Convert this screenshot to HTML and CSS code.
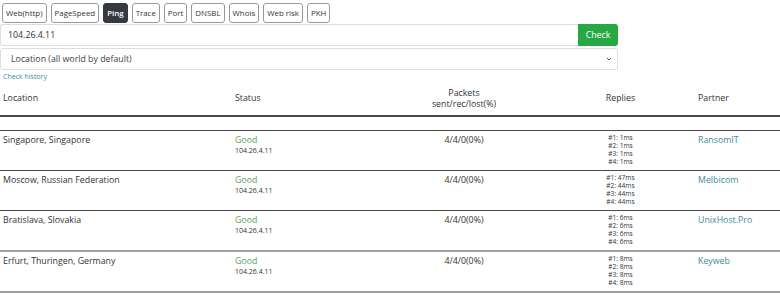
FILE: index.html
```html
<!DOCTYPE html>
<html lang="en">
<head>
    <meta charset="UTF-8">
    <title>Ping</title>
    <link rel="stylesheet" href="styles.css">
</head>
<body>
    <div class="wrap">
        <div class="tabs">
            <button type="button" class="tab">Web(http)</button>
            <button type="button" class="tab">PageSpeed</button>
            <button type="button" class="tab is-active">Ping</button>
            <button type="button" class="tab">Trace</button>
            <button type="button" class="tab">Port</button>
            <button type="button" class="tab">DNSBL</button>
            <button type="button" class="tab">Whois</button>
            <button type="button" class="tab">Web risk</button>
            <button type="button" class="tab">PKH</button>
        </div>

        <div class="form">
            <div class="input-group">
                <input type="text" class="field" value="104.26.4.11">
                <button type="button" class="check-btn">Check</button>
            </div>
            <div class="select-box">
                <span>Location (all world by default)</span>
                <svg class="caret" width="6" height="4" viewBox="0 0 6 4"><path d="M1 1l2 2 2-2" fill="none" stroke="#555" stroke-width="1"/></svg>
            </div>
        </div>

        <a class="history" href="#">Check history</a>

        <table class="result">
            <colgroup>
                <col class="c-loc">
                <col class="c-status">
                <col class="c-packets">
                <col class="c-replies">
                <col class="c-partner">
            </colgroup>
            <thead>
                <tr>
                    <th>Location</th>
                    <th>Status</th>
                    <th class="center">Packets<br>sent/rec/lost(%)</th>
                    <th class="center">Replies</th>
                    <th>Partner</th>
                </tr>
            </thead>
            <tbody>
                <tr class="spacer"><td colspan="5"></td></tr>
                <tr>
                    <td>Singapore, Singapore</td>
                    <td><span class="good">Good</span><span class="ip">104.26.4.11</span></td>
                    <td class="center">4/4/0(0%)</td>
                    <td class="center"><ul class="replies"><li>#1: 1ms</li><li>#2: 1ms</li><li>#3: 1ms</li><li>#4: 1ms</li></ul></td>
                    <td><a class="partner" href="#">RansomIT</a></td>
                </tr>
                <tr>
                    <td>Moscow, Russian Federation</td>
                    <td><span class="good">Good</span><span class="ip">104.26.4.11</span></td>
                    <td class="center">4/4/0(0%)</td>
                    <td class="center"><ul class="replies"><li>#1: 47ms</li><li>#2: 44ms</li><li>#3: 44ms</li><li>#4: 44ms</li></ul></td>
                    <td><a class="partner" href="#">Melbicom</a></td>
                </tr>
                <tr class="soft">
                    <td>Bratislava, Slovakia</td>
                    <td><span class="good">Good</span><span class="ip">104.26.4.11</span></td>
                    <td class="center">4/4/0(0%)</td>
                    <td class="center"><ul class="replies"><li>#1: 6ms</li><li>#2: 6ms</li><li>#3: 6ms</li><li>#4: 6ms</li></ul></td>
                    <td><a class="partner" href="#">UnixHost.Pro</a></td>
                </tr>
                <tr class="soft">
                    <td>Erfurt, Thuringen, Germany</td>
                    <td><span class="good">Good</span><span class="ip">104.26.4.11</span></td>
                    <td class="center">4/4/0(0%)</td>
                    <td class="center"><ul class="replies"><li>#1: 8ms</li><li>#2: 8ms</li><li>#3: 8ms</li><li>#4: 8ms</li></ul></td>
                    <td><a class="partner" href="#">Keyweb</a></td>
                </tr>
            </tbody>
        </table>
    </div>
</body>
</html>
```
FILE: styles.css
```css
html, body {margin:0;background:#fff;color:#333;}
body {font-family:"Open Sans", "Noto Sans", sans-serif;font-size:8.8px;}
ul {list-style:none;margin:0;padding:0;}
a {text-decoration:none;}

.wrap {width:780px;padding-top:3px;}

.tabs {display:flex;gap:4px;padding-left:2px;height:20px;}
.tab {font:inherit;font-size:7.9px;color:#333;background:#fff;border:1px solid #999;border-radius:3px;padding:0 3px;height:20px;line-height:18px;}
.tab.is-active {background:#343a40;border-color:#343a40;color:#fff;font-weight:600;}

.form {width:618px;margin-top:1px;}
.input-group {display:flex;height:22px;}
.input-group .field {flex:1;font:inherit;font-size:8.8px;color:#333;border:1px solid #ddd;border-right:0;border-radius:3px 0 0 3px;padding:0 7px;height:22px;box-sizing:border-box;outline:none;}
.check-btn {width:40px;height:22px;font:inherit;font-size:8.8px;color:#fff;background:#28a745;border:0;border-radius:0 3px 3px 0;padding:0;}
.select-box {display:flex;justify-content:space-between;align-items:center;height:22px;margin-top:2px;box-sizing:border-box;border:1px solid #ddd;border-radius:3px;padding:0 5px 0 10px;color:#444;}
.caret {display:block;}

.history {display:block;margin:2px 0 0 3px;font-size:7px;color:#3a8fa6;line-height:10px;}

.result {width:780px;border-collapse:collapse;table-layout:fixed;margin-top:1px;}
.result .c-loc {width:232px;}
.result .c-status {width:150px;}
.result .c-packets {width:164px;}
.result .c-replies {width:149px;}
.result .c-partner {width:85px;}
.result th {font-weight:400;text-align:left;padding:3px 3px 4px;height:25px;vertical-align:middle;line-height:11px;border-bottom:2px solid #4a4a4a;}
.result th.center, .result td.center {text-align:center;}
.result td {vertical-align:top;padding:3px 3px 4px;border-bottom:1px solid #4a4a4a;line-height:12px;}
.result tr.spacer td {height:13px;padding:0;}
.result tr.soft td {border-bottom:2px solid #a0a0a0;}

.good {display:block;color:#5d9a6c;line-height:12px;}
.ip {display:block;font-size:7px;line-height:9px;color:#333;}
.replies li {font-size:6.6px;line-height:8px;color:#333;}
.partner {color:#3b8c9d;}
```
